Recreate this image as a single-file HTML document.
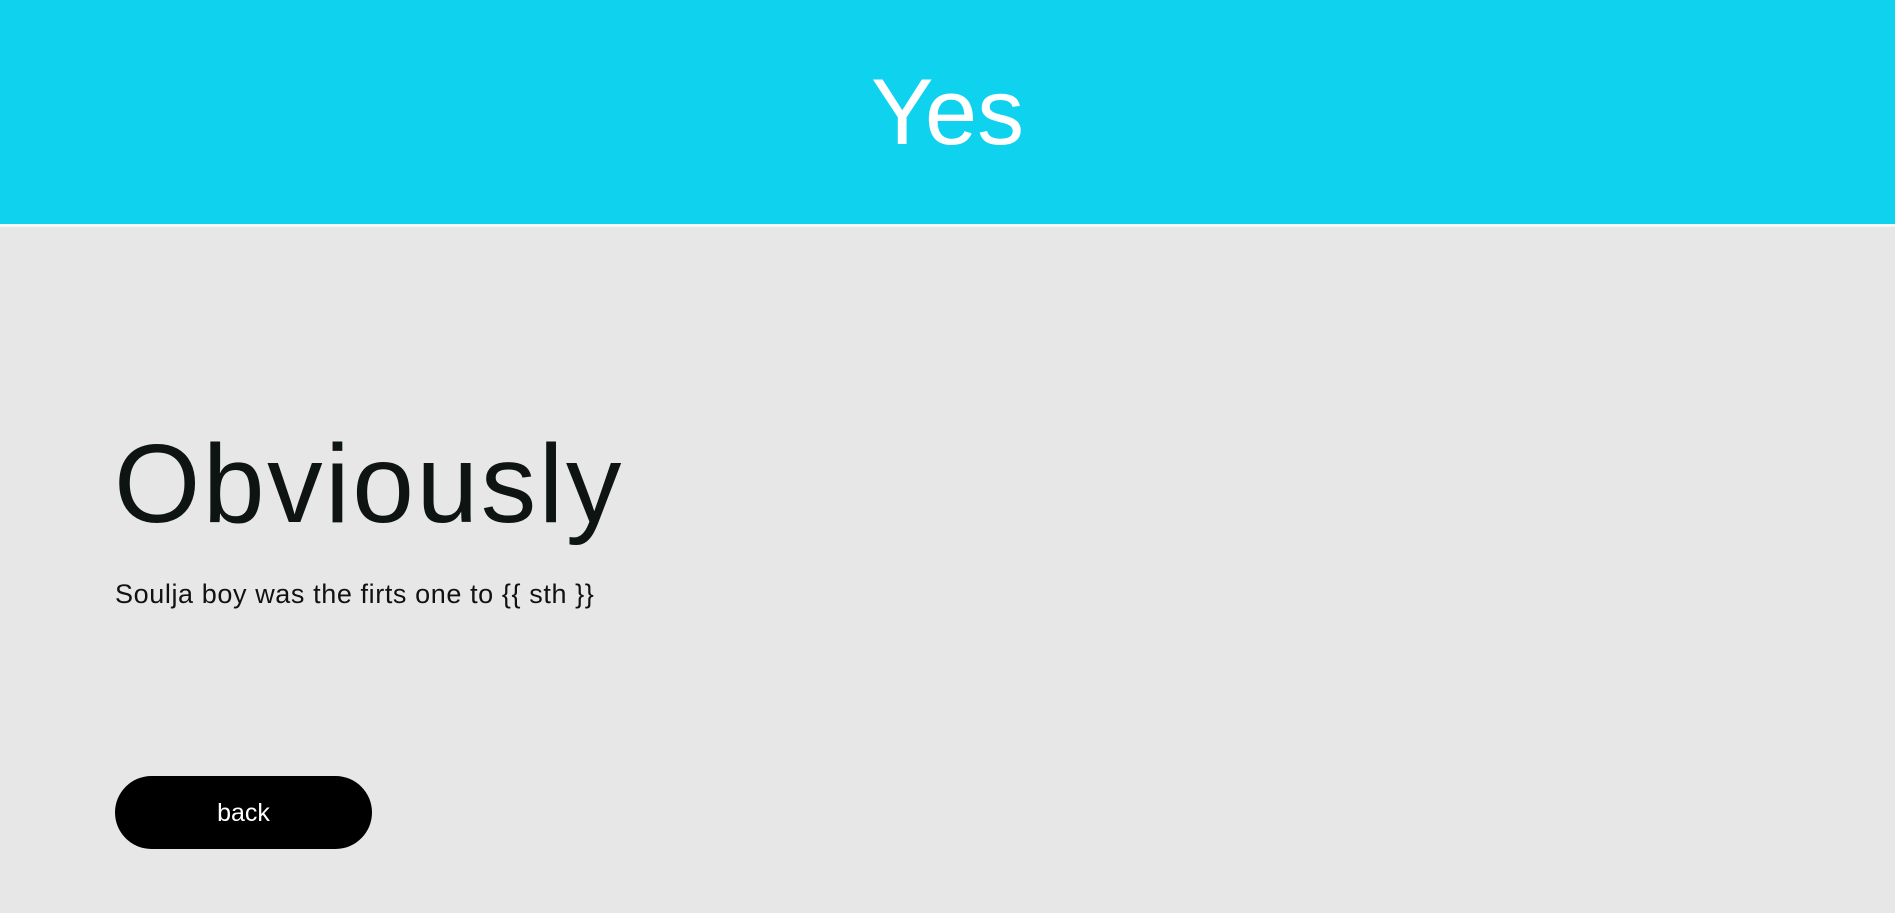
<!DOCTYPE html>
<html><head><meta charset="utf-8"><style>
html,body{margin:0;padding:0;width:1895px;height:913px;overflow:hidden;background:#e6e7e6;font-family:"Liberation Sans",sans-serif;}
.hdr{position:absolute;left:0;top:0;width:1895px;height:224px;background:#0fd2ef;border-bottom:3px solid #f4f8f8;}
.hdr h1{margin:0;position:absolute;left:0;width:1895px;text-align:center;top:57px;font-weight:400;font-size:94px;line-height:110px;color:#fff;}
.t{position:absolute;left:114px;top:414px;font-size:111px;line-height:140px;color:#0d1412;font-weight:400;margin:0;letter-spacing:2.5px;}
.p{position:absolute;left:115px;top:578px;font-size:27px;line-height:32px;color:#111;font-weight:400;letter-spacing:0.6px;}
.b{position:absolute;left:115px;top:776px;width:257px;height:73px;border-radius:37px;background:#000;color:#fff;font-size:25px;line-height:75px;text-align:center;}
</style></head><body>
<div class="hdr"><h1>Yes</h1></div>
<h2 class="t">Obviously</h2>
<div class="p">Soulja boy was the firts one to {{ sth }}</div>
<div class="b">back</div>
</body></html>
